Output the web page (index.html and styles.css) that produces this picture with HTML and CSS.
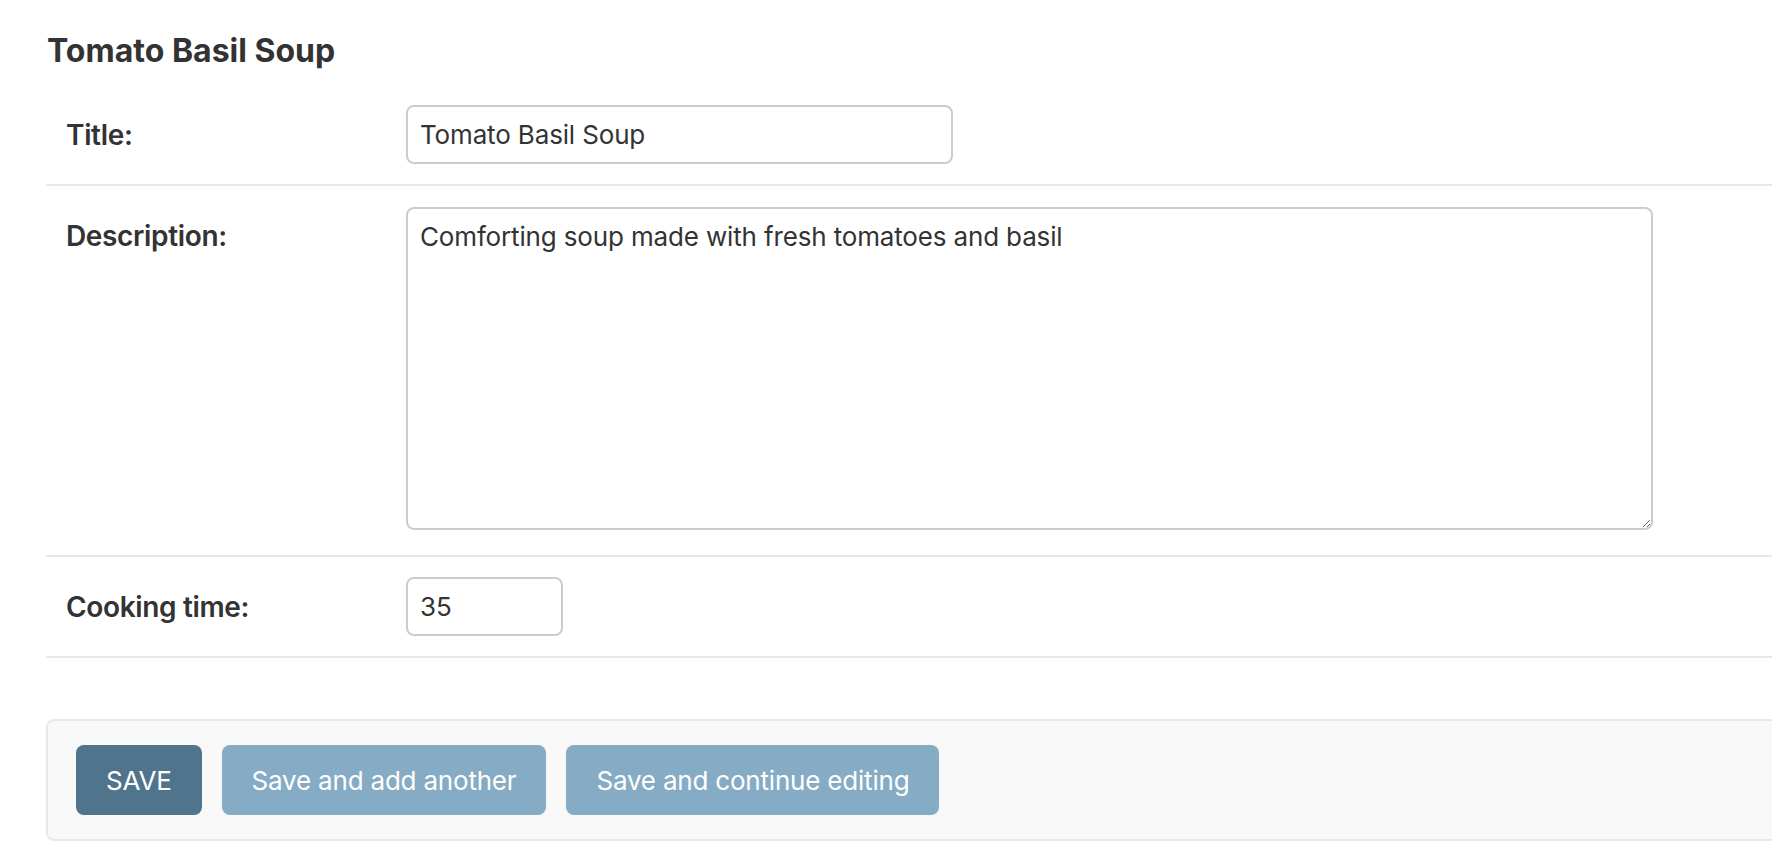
FILE: index.html
```html
<!DOCTYPE html>
<html lang="en">
<head>
<meta charset="utf-8">
<title>Change recipe</title>
<link rel="stylesheet" href="styles.css">
</head>
<body>
<main class="content">
  <h2 class="subtitle">Tomato Basil Soup</h2>
  <form class="change-form">
    <fieldset class="module">
      <div class="form-row">
        <label class="field-label" for="id_title">Title:</label>
        <input class="text-input title-input" id="id_title" type="text" value="Tomato Basil Soup">
      </div>
      <div class="form-row">
        <label class="field-label" for="id_description">Description:</label>
        <textarea class="text-area" id="id_description">Comforting soup made with fresh tomatoes and basil</textarea>
      </div>
      <div class="form-row">
        <label class="field-label" for="id_cooking_time">Cooking time:</label>
        <input class="text-input int-input" id="id_cooking_time" type="text" value="35">
      </div>
    </fieldset>
    <div class="submit-row">
      <input type="button" class="btn btn-default" value="SAVE">
      <input type="button" class="btn" value="Save and add another">
      <input type="button" class="btn" value="Save and continue editing">
    </div>
  </form>
</main>
</body>
</html>
```

FILE: styles.css
```css
* {
  box-sizing: border-box;
}

html,
body {
  margin: 0;
  padding: 0;
  background: #ffffff;
}

body {
  font-family: Inter, "Noto Sans", "Liberation Sans", sans-serif;
  color: #333333;
  overflow: hidden;
}

.content {
  margin: 0 -60px 0 46px;
  padding-top: 33px;
}

.subtitle {
  margin: 0 0 16px 1px;
  font-size: 32px;
  line-height: 36px;
  font-weight: 700;
  letter-spacing: 0;
  color: #333333;
}

.change-form {
  margin: 0;
}

.module {
  margin: 0;
  padding: 0;
  border: none;
  min-width: 0;
}

.form-row {
  display: flex;
  align-items: flex-start;
  padding: 20px;
  border-bottom: 2px solid #e8e8e8;
}

.field-label {
  flex: 0 0 340px;
  padding-top: 13px;
  font-size: 28px;
  line-height: 34px;
  font-weight: 600;
  letter-spacing: -0.35px;
  color: #333333;
}

.text-input,
.text-area {
  font-family: inherit;
  font-size: 26px;
  letter-spacing: -0.15px;
  color: #333333;
  background: #ffffff;
  border: 2px solid #cccccc;
  border-radius: 8px;
  outline: none;
  margin: 0;
}

.text-input {
  height: 59px;
  padding: 0 12px;
}

.title-input {
  width: 547px;
}

.int-input {
  width: 157px;
}

.text-area {
  display: block;
  width: 1247px;
  height: 323px;
  margin: 1px 0 5px;
  padding: 12px 12px;
  line-height: 32px;
  resize: both;
}

.submit-row {
  display: flex;
  gap: 20px;
  margin-top: 61px;
  padding: 24px 28px;
  background: #f8f8f8;
  border: 2px solid #e8e8e8;
  border-radius: 8px;
}

.btn {
  height: 70px;
  padding: 0 30px;
  border: none;
  border-radius: 8px;
  background: #85acc4;
  color: #ffffff;
  font-family: inherit;
  font-size: 26px;
  font-weight: 400;
  letter-spacing: -0.2px;
}

.btn-default {
  background: #50748c;
}
```
